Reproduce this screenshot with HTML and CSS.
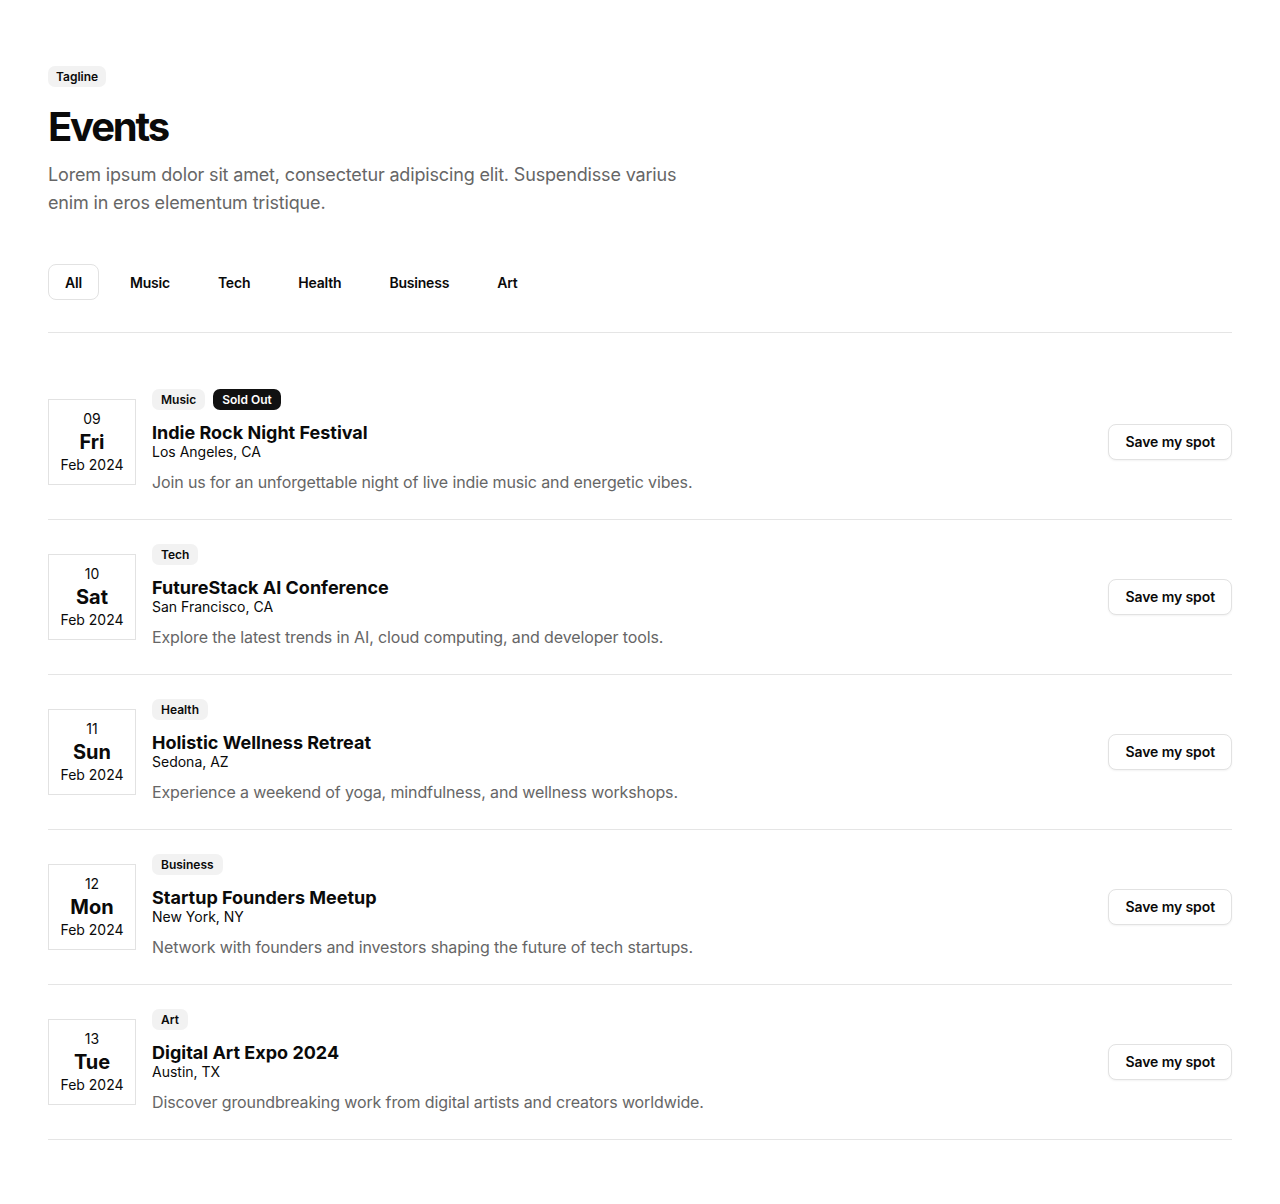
FILE: index.html
```html
<!DOCTYPE html>
<html lang="en">
<head>
<meta charset="utf-8">
<title>Events</title>
<link rel="stylesheet" href="styles.css">
</head>
<body>
<main class="page">
  <header class="head">
    <span class="tagline">Tagline</span>
    <h1 class="title">Events</h1>
    <p class="lead">Lorem ipsum dolor sit amet, consectetur adipiscing elit. Suspendisse varius enim in eros elementum tristique.</p>
  </header>

  <nav class="tabs">
    <button class="tab active">All</button>
    <button class="tab">Music</button>
    <button class="tab">Tech</button>
    <button class="tab">Health</button>
    <button class="tab">Business</button>
    <button class="tab">Art</button>
  </nav>

  <section class="list">
    <article class="event">
      <div class="date"><span class="day">09</span><span class="wd">Fri</span><span class="my">Feb 2024</span></div>
      <div class="info">
        <div class="badges"><span class="badge">Music</span><span class="badge dark">Sold Out</span></div>
        <h2 class="ev-title">Indie Rock Night Festival</h2>
        <p class="loc">Los Angeles, CA</p>
        <p class="desc">Join us for an unforgettable night of live indie music and energetic vibes.</p>
      </div>
      <button class="save">Save my spot</button>
    </article>
    <article class="event">
      <div class="date"><span class="day">10</span><span class="wd">Sat</span><span class="my">Feb 2024</span></div>
      <div class="info">
        <div class="badges"><span class="badge">Tech</span></div>
        <h2 class="ev-title">FutureStack AI Conference</h2>
        <p class="loc">San Francisco, CA</p>
        <p class="desc">Explore the latest trends in AI, cloud computing, and developer tools.</p>
      </div>
      <button class="save">Save my spot</button>
    </article>
    <article class="event">
      <div class="date"><span class="day">11</span><span class="wd">Sun</span><span class="my">Feb 2024</span></div>
      <div class="info">
        <div class="badges"><span class="badge">Health</span></div>
        <h2 class="ev-title">Holistic Wellness Retreat</h2>
        <p class="loc">Sedona, AZ</p>
        <p class="desc">Experience a weekend of yoga, mindfulness, and wellness workshops.</p>
      </div>
      <button class="save">Save my spot</button>
    </article>
    <article class="event">
      <div class="date"><span class="day">12</span><span class="wd">Mon</span><span class="my">Feb 2024</span></div>
      <div class="info">
        <div class="badges"><span class="badge">Business</span></div>
        <h2 class="ev-title">Startup Founders Meetup</h2>
        <p class="loc">New York, NY</p>
        <p class="desc">Network with founders and investors shaping the future of tech startups.</p>
      </div>
      <button class="save">Save my spot</button>
    </article>
    <article class="event">
      <div class="date"><span class="day">13</span><span class="wd">Tue</span><span class="my">Feb 2024</span></div>
      <div class="info">
        <div class="badges"><span class="badge">Art</span></div>
        <h2 class="ev-title">Digital Art Expo 2024</h2>
        <p class="loc">Austin, TX</p>
        <p class="desc">Discover groundbreaking work from digital artists and creators worldwide.</p>
      </div>
      <button class="save">Save my spot</button>
    </article>
  </section>
</main>
</body>
</html>
```

FILE: styles.css
```css
* { box-sizing: border-box; }
html, body { margin: 0; padding: 0; background: #fff; }
body {
  font-family: Inter, "Noto Sans", "Liberation Sans", sans-serif;
  color: #0a0a0a;
}
.page {
  padding: 66px 48px 64px;
}
.head { display: flex; flex-direction: column; align-items: flex-start; }
.tagline {
  display: inline-block;
  background: #f2f2f2;
  border-radius: 7px;
  font-size: 12px;
  font-weight: 600;
  line-height: 17px;
  padding: 2px 8px;
}
.title {
  margin: 16px 0 0;
  font-size: 40px;
  line-height: 48px;
  font-weight: 700;
  letter-spacing: -2.2px;
}
.lead {
  margin: 10px 0 0;
  max-width: 660px;
  font-size: 18px;
  line-height: 28px;
  color: #666;
  letter-spacing: -0.16px;
}
.tabs {
  display: flex;
  gap: 14px;
  margin-top: 47px;
  padding-bottom: 32px;
  border-bottom: 1px solid #e5e5e5;
}
.tab {
  font-family: inherit;
  font-size: 14px;
  font-weight: 600;
  letter-spacing: -0.2px;
  color: #0a0a0a;
  background: transparent;
  border: 1px solid transparent;
  border-radius: 8px;
  height: 36px;
  padding: 0 16px;
  cursor: pointer;
}
.tab.active { border-color: #e2e2e2; }
.list { margin-top: 32px; }
.event {
  display: flex;
  align-items: center;
  gap: 16px;
  padding: 24px 0 25px;
  border-bottom: 1px solid #e5e5e5;
}
.date {
  width: 88px;
  height: 86px;
  flex: none;
  border: 1px solid #e2e2e2;
  display: flex;
  flex-direction: column;
  align-items: center;
  justify-content: center;
}
.day { font-size: 14px; line-height: 20px; }
.wd { font-size: 20px; line-height: 26px; font-weight: 700; }
.my { font-size: 14px; line-height: 20px; }
.info { flex: 1; }
.badges { display: flex; gap: 8px; }
.badge {
  background: #f2f2f2;
  border-radius: 7px;
  font-size: 12px;
  font-weight: 600;
  line-height: 17px;
  padding: 2px 9px;
}
.badge.dark { background: #111; color: #fff; }
.ev-title {
  margin: 12px 0 0;
  font-size: 18px;
  line-height: 22px;
  font-weight: 700;
}
.loc { margin: 0; font-size: 14px; line-height: 16px; }
.desc {
  margin: 10px 0 0;
  font-size: 16px;
  line-height: 24px;
  color: #666;
  letter-spacing: -0.12px;
}
.save {
  flex: none;
  font-family: inherit;
  font-size: 14px;
  font-weight: 600;
  letter-spacing: -0.1px;
  color: #0a0a0a;
  background: #fff;
  border: 1px solid #e2e2e2;
  border-radius: 8px;
  height: 36px;
  padding: 0 16px;
  box-shadow: 0 1px 2px rgba(0,0,0,0.05);
  cursor: pointer;
}
```
